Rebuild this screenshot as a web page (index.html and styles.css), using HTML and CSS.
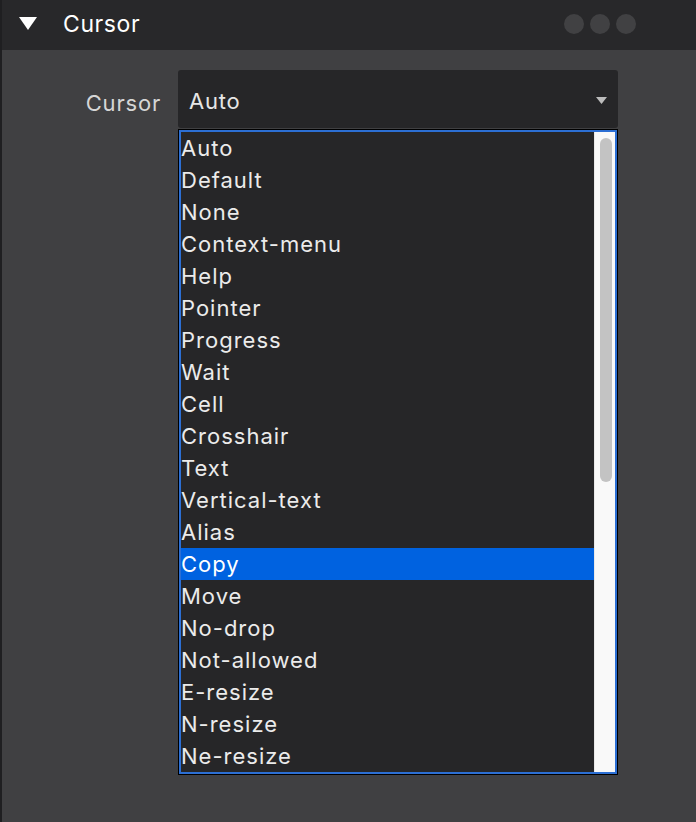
FILE: index.html
```html
<!DOCTYPE html>
<html lang="en">
<head>
  <meta charset="UTF-8" />
  <title>Cursor</title>
  <link rel="stylesheet" href="styles.css">
</head>
<body>

<div class="panel">
  <header class="panel-head">
    <svg class="caret" width="18" height="14" viewBox="0 0 18 14"><path d="M0 0H18L9 13Z" fill="#fff"/></svg>
    <span class="panel-title">Cursor</span>
    <div class="dots"><i></i><i></i><i></i></div>
  </header>

  <div class="panel-body">
    <div class="field">
      <label class="field-label">Cursor</label>
      <div class="picker">
        <div class="select">
          <span>Auto</span>
          <svg width="11" height="7" viewBox="0 0 11 7"><path d="M0 0H11L5.5 7Z" fill="#bcbcbc"/></svg>
        </div>
        <div class="listbox">
          <ul class="options">
            <li>Auto</li>
            <li>Default</li>
            <li>None</li>
            <li>Context-menu</li>
            <li>Help</li>
            <li>Pointer</li>
            <li>Progress</li>
            <li>Wait</li>
            <li>Cell</li>
            <li>Crosshair</li>
            <li>Text</li>
            <li>Vertical-text</li>
            <li>Alias</li>
            <li class="selected">Copy</li>
            <li>Move</li>
            <li>No-drop</li>
            <li>Not-allowed</li>
            <li>E-resize</li>
            <li>N-resize</li>
            <li>Ne-resize</li>
          </ul>
          <div class="scrollbar"><div class="thumb"></div></div>
        </div>
      </div>
    </div>
  </div>
</div>

</body>
</html>
```

FILE: styles.css
```css
body {
  margin: 0;
  font-family: Inter, "Noto Sans", sans-serif;
  background: #404042;
  color: #e6e6e6;
}
.panel {
  min-height: 822px;
  border-left: 2px solid #1f1f21;
  background: #404042;
}
.panel-head {
  height: 50px;
  box-sizing: border-box;
  display: flex;
  align-items: center;
  background: #28282a;
  padding: 0 60px 3px 17px;
}
.caret {
  margin-right: 26px;
}
.panel-title {
  font-size: 23px;
  letter-spacing: .6px;
  color: #fff;
  flex: 1;
}
.dots {
  display: flex;
  gap: 6px;
}
.dots i {
  width: 20px;
  height: 20px;
  border-radius: 50%;
  background: #414143;
}
.panel-body {
  padding-top: 20px;
}
.field {
  display: flex;
  align-items: flex-start;
  gap: 17px;
}
.field-label {
  width: 159px;
  text-align: right;
  font-size: 22px;
  letter-spacing: .8px;
  line-height: 58px;
  padding-top: 4px;
  color: #d6d6d6;
}
.picker {
  width: 440px;
}
.select {
  height: 58px;
  box-sizing: border-box;
  display: flex;
  align-items: center;
  justify-content: space-between;
  padding: 4px 11px 0 11px;
  background: #262628;
  border-radius: 3px;
  font-size: 22px;
  letter-spacing: .8px;
  color: #e6e6e6;
}
.select svg {
  margin-top: -2px;
}
.listbox {
  margin-top: 1px;
  display: grid;
  grid-template-columns: 1fr 21px;
  border: 1px solid #000;
  padding: 2px;
  background: #262628;
  box-shadow: inset 0 0 0 2px #2c6fd4;
}
.options {
  list-style: none;
  margin: 0;
  padding: 0;
}
.options li {
  height: 32px;
  line-height: 32px;
  font-size: 22px;
  letter-spacing: 1px;
  color: #ebebeb;
  white-space: nowrap;
}
.options li.selected {
  background: #0062e0;
  color: #fff;
}
.scrollbar {
  background: #f9f9f9;
  border-left: 1px solid #e9e9e9;
  padding: 6px 3px 0 5px;
}
.thumb {
  height: 344px;
  border-radius: 6px;
  background: #c3c3c3;
}
```
